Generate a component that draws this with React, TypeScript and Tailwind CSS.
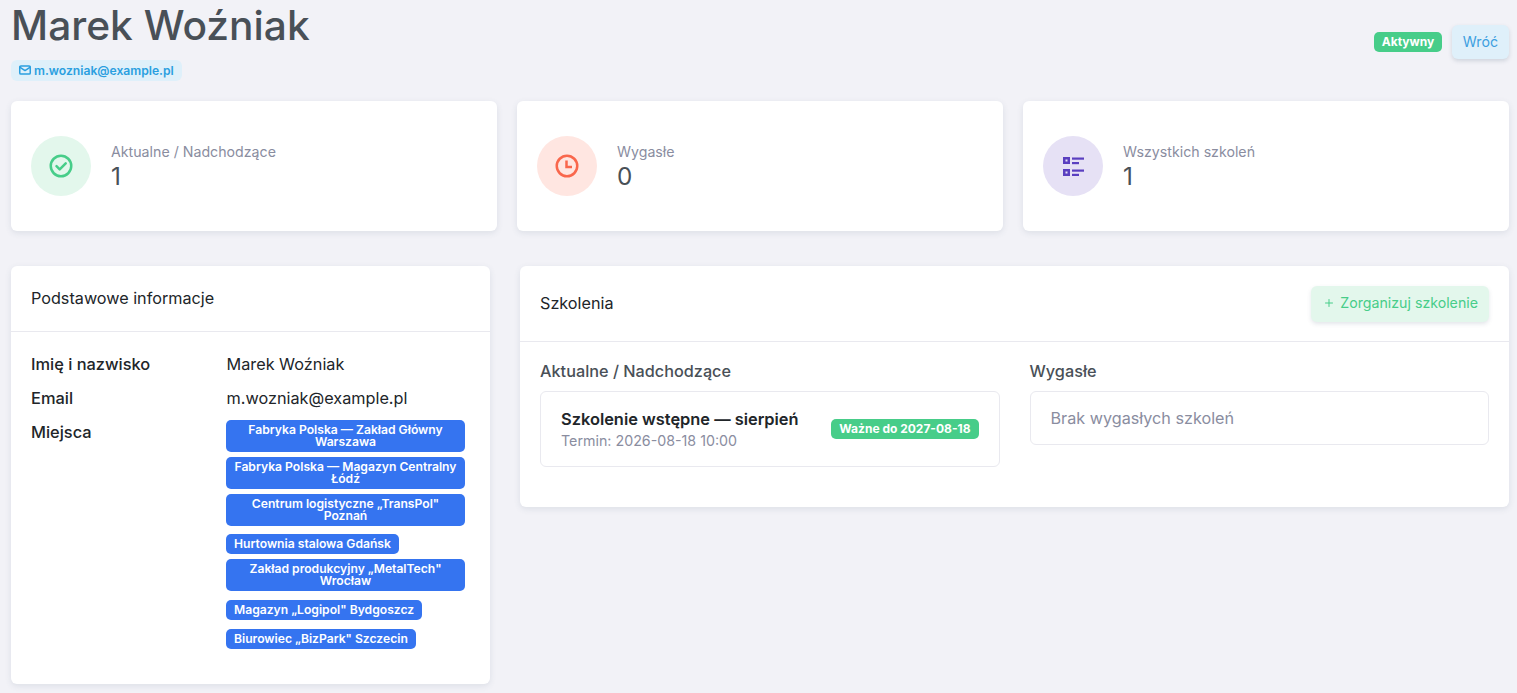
import { TbMail, TbPlus } from 'react-icons/tb';
import type { ReactNode } from 'react';

const places = [
    { name: 'Fabryka Polska — Zakład Główny Warszawa', spacing: 'my-[2.5px] w-[239px]' },
    { name: 'Fabryka Polska — Magazyn Centralny Łódź', spacing: 'my-[2.5px] w-[239px]' },
    { name: 'Centrum logistyczne „TransPol" Poznań', spacing: 'my-[2.5px] w-[239px]' },
    { name: 'Hurtownia stalowa Gdańsk', spacing: 'mt-[5.5px] mb-[2.5px]' },
    { name: 'Zakład produkcyjny „MetalTech" Wrocław', spacing: 'my-[2.5px] w-[239px]' },
    { name: 'Magazyn „Logipol" Bydgoszcz', spacing: 'mt-[6.5px] mb-[2.5px]' },
    { name: 'Biurowiec „BizPark" Szczecin', spacing: 'mt-[6.5px] mb-[2.5px]' },
];

function CheckIcon() {
    return (
        <svg width="24" height="24" viewBox="0 0 24 24" fill="none" stroke="currentColor" strokeWidth="2.5" className="text-[#47cd89]">
            <circle cx="12" cy="12" r="10.25" />
            <path d="M7.5 12.2l3.2 3.2 6-6" strokeLinecap="round" strokeLinejoin="round" />
        </svg>
    );
}

function ClockIcon() {
    return (
        <svg width="24" height="24" viewBox="0 0 24 24" fill="none" stroke="currentColor" strokeWidth="2.5" className="text-[#f9674c]">
            <circle cx="12" cy="12" r="10.25" />
            <path d="M11.5 6.5v6.5h5.5" />
        </svg>
    );
}

function ListIcon() {
    return (
        <svg width="21" height="19" viewBox="0 0 21 19" fill="none" className="text-[#5a3fc0]">
            <rect x="1.25" y="1.25" width="4.5" height="4.5" stroke="currentColor" strokeWidth="2.5" />
            <rect x="1.25" y="13.25" width="4.5" height="4.5" stroke="currentColor" strokeWidth="2.5" />
            <rect x="9" y="0.5" width="12" height="2.2" fill="currentColor" />
            <rect x="9" y="5" width="7" height="2.2" fill="currentColor" />
            <rect x="9" y="12.5" width="12" height="2.2" fill="currentColor" />
            <rect x="9" y="16.8" width="7" height="2.2" fill="currentColor" />
        </svg>
    );
}

function StatCard({ icon, circle, label, value }: { icon: ReactNode; circle: string; label: string; value: string }) {
    return (
        <div className="flex h-[130px] items-center gap-5 rounded-md bg-white px-5 shadow-[0_2px_6px_rgba(67,89,113,0.12)]">
            <div className={`flex h-[60px] w-[60px] items-center justify-center rounded-full ${circle}`}>{icon}</div>
            <div>
                <div className="text-[14.2px] leading-[21px] text-[#8a8d9f]">{label}</div>
                <div className="pb-[2px] text-[24.3px] leading-[28px] text-[#495057]">{value}</div>
            </div>
        </div>
    );
}

function InfoRow({ label, children }: { label: string; children: ReactNode }) {
    return (
        <div className="flex">
            <div className="w-[195.5px] shrink-0 text-[16.4px] leading-6 font-medium text-[#212529]">{label}</div>
            <div className="flex-1 text-[16.25px] leading-6 text-[#212529]">{children}</div>
        </div>
    );
}

export default function App() {
    return (
        <div className="min-h-[693px] bg-[#f2f2f7] pr-2 pl-[11px] font-['Inter',sans-serif]">
            {/* Header */}
            <div className="flex h-[101px] items-start justify-between">
                <div>
                    <h1 className="text-[40.7px] leading-[52px] font-medium text-[#495057]">Marek Woźniak</h1>
                    <span className="mt-[8px] inline-flex h-[21px] items-center gap-[2px] rounded-md bg-[#dff0fa] pt-[1px] pr-2 pl-[7px] text-[12.15px] font-semibold text-[#2b9fe0]">
                        <TbMail size={14} strokeWidth={2.6} className="-mt-[2px]" />
                        m.wozniak@example.pl
                    </span>
                </div>
                <div className="mt-[25px] flex items-center gap-[10px]">
                    <span className="rounded-[5px] bg-[#47cd89] px-[7.5px] py-[2px] text-xs leading-4 font-bold text-white">Aktywny</span>
                    <button className="h-[34px] rounded-md bg-[#dff0fa] px-[11px] text-[14.2px] text-[#3d9fe0] shadow-[0_2px_4px_rgba(67,89,113,0.2)]">Wróć</button>
                </div>
            </div>

            {/* Stats */}
            <div className="grid grid-cols-3 gap-5">
                <StatCard circle="bg-[#e3f7ec]" icon={<CheckIcon />} label="Aktualne / Nadchodzące" value="1" />
                <StatCard circle="bg-[#ffe6e1]" icon={<ClockIcon />} label="Wygasłe" value="0" />
                <StatCard circle="bg-[#e6e1f5]" icon={<ListIcon />} label="Wszystkich szkoleń" value="1" />
            </div>

            <div className="mt-[35px] flex items-start gap-[30px]">
                {/* Basic info */}
                <div className="w-[479px] shrink-0 rounded-md bg-white shadow-[0_2px_6px_rgba(67,89,113,0.12)]">
                    <div className="flex h-[66px] items-center border-b border-[#e9e9ef] px-5 pb-[1px] text-[16.2px] text-[#212529]">Podstawowe informacje</div>
                    <div className="flex h-[352px] flex-col gap-[10px] px-5 pt-5">
                        <InfoRow label="Imię i nazwisko">Marek Woźniak</InfoRow>
                        <InfoRow label="Email">m.wozniak@example.pl</InfoRow>
                        <InfoRow label="Miejsca">
                            <div className="-mt-[2.5px] -ml-[0.5px] flex flex-col items-start">
                                {places.map((place) => (
                                    <span
                                        key={place.name}
                                        className={`rounded-[5px] bg-[#3574f0] px-2 py-1 text-center text-[12.15px] leading-[12px] font-semibold text-white ${place.spacing}`}
                                    >
                                        {place.name}
                                    </span>
                                ))}
                            </div>
                        </InfoRow>
                    </div>
                </div>

                {/* Trainings */}
                <div className="flex-1 rounded-md bg-white shadow-[0_2px_6px_rgba(67,89,113,0.12)]">
                    <div className="flex h-[76px] items-center justify-between border-b border-[#e9e9ef] px-5">
                        <span className="pb-[1px] text-[16.2px] text-[#212529]">Szkolenia</span>
                        <button className="flex h-[36px] items-center gap-[5px] rounded-md bg-[#e3f7ec] pr-[11px] pb-[1px] pl-[12px] text-[14.2px] text-[#47cd89] shadow-[0_2px_4px_rgba(67,89,113,0.15)]">
                            <TbPlus size={12} />
                            Zorganizuj szkolenie
                        </button>
                    </div>
                    <div className="grid h-[165px] grid-cols-2 gap-[30px] px-5 pt-[17px]">
                        <div>
                            <h2 className="mb-2 text-[16.25px] leading-6 font-medium text-[#495057]">Aktualne / Nadchodzące</h2>
                            <div className="flex h-[76px] items-center justify-between rounded-md border border-[#e9e9ef] px-5">
                                <div>
                                    <div className="text-[16.4px] leading-6 font-semibold text-[#212529]">Szkolenie wstępne — sierpień</div>
                                    <div className="text-[14.25px] leading-[20px] text-[#8a8d9f]">Termin: 2026-08-18 10:00</div>
                                </div>
                                <span className="rounded-[5px] bg-[#47cd89] px-2 py-[2px] text-xs leading-4 font-bold text-white">Ważne do 2027-08-18</span>
                            </div>
                        </div>
                        <div>
                            <h2 className="mb-2 text-[16.25px] leading-6 font-medium text-[#495057]">Wygasłe</h2>
                            <div className="flex h-[54px] items-center rounded-md border border-[#e9e9ef] px-5 text-[16.2px] text-[#8a8d9f]">Brak wygasłych szkoleń</div>
                        </div>
                    </div>
                </div>
            </div>
        </div>
    );
}
